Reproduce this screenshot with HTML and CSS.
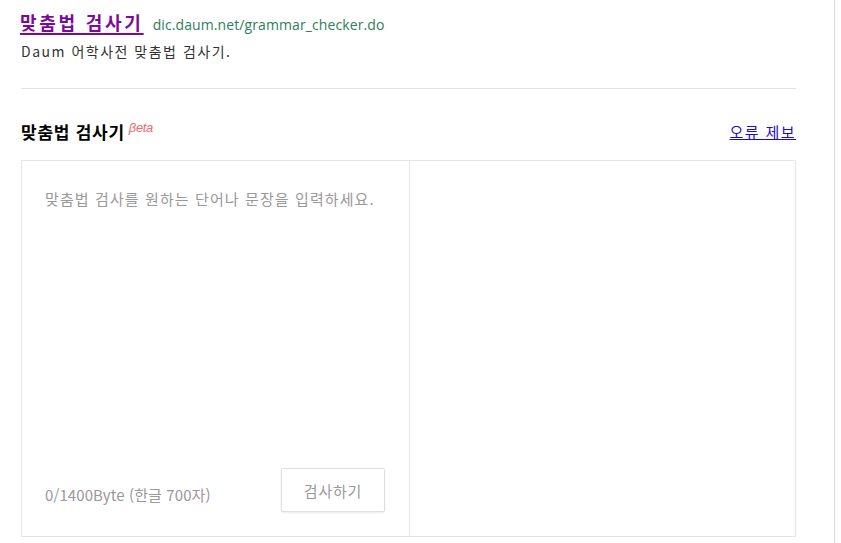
FILE: index.html
```html
<!DOCTYPE html>
<html lang="ko">
<head>
<meta charset="utf-8">
<title>맞춤법 검사기</title>
<link rel="stylesheet" href="styles.css">
</head>
<body>
<div class="page">
  <main class="content">
    <div class="result-head">
      <a class="result-title" href="#">맞춤법 검사기</a>
      <span class="result-url">dic.daum.net/grammar_checker.do</span>
    </div>
    <p class="result-desc">Daum 어학사전 맞춤법 검사기.</p>
    <hr class="sep">
    <div class="checker-head">
      <h2 class="checker-title">맞춤법 검사기<sup class="beta">βeta</sup></h2>
      <a class="report" href="#">오류 제보</a>
    </div>
    <div class="checker">
      <div class="panel panel-input">
        <p class="placeholder">맞춤법 검사를 원하는 단어나 문장을 입력하세요.</p>
        <div class="panel-foot">
          <span class="count">0/1400Byte (한글 700자)</span>
          <button class="check-btn" type="button">검사하기</button>
        </div>
      </div>
      <div class="panel panel-result"></div>
    </div>
  </main>
  <div class="rail"></div>
</div>
</body>
</html>
```

FILE: styles.css
```css
html, body {
  margin: 0;
  padding: 0;
  background: #fff;
  height: 100%;
}
body {
  font-family: "Noto Sans CJK KR", "Noto Sans", sans-serif;
  color: #222;
}
.page {
  display: flex;
  height: 100%;
}
.content {
  width: 775px;
  margin-left: 21px;
  padding-top: 9px;
}
.rail {
  margin-left: 38px;
  width: 0;
  border-left: 1px solid #dcdcdc;
}
.result-head {
  display: flex;
  align-items: baseline;
  gap: 9px;
  height: 30px;
}
.result-title {
  font-size: 18px;
  font-weight: 700;
  color: #7b0a99;
  text-decoration: underline;
  text-decoration-thickness: 2px;
  text-underline-offset: 3px;
  margin-left: -1px;
  letter-spacing: 2.75px;
}
.result-url {
  font-family: "Open Sans", "Noto Sans", sans-serif;
  font-size: 14px;
  color: #2e7d5b;
  letter-spacing: 0.1px;
}
.result-desc {
  margin: 0;
  font-size: 14px;
  line-height: 24px;
  color: #333;
  height: 24px;
  letter-spacing: 1.5px;
}
.sep {
  margin: 25px 0 0;
  border: 0;
  border-top: 1px solid #e2e2e2;
}
.checker-head {
  display: flex;
  justify-content: space-between;
  align-items: flex-end;
  height: 71px;
  box-sizing: border-box;
  padding-bottom: 17px;
}
.checker-title {
  margin: 0;
  font-size: 17px;
  font-weight: 700;
  color: #000;
  line-height: 22px;
  letter-spacing: 0.75px;
}
.beta {
  font-family: "Liberation Sans", sans-serif;
  font-size: 13px;
  font-style: italic;
  font-weight: 400;
  color: #f06a6a;
  margin-left: 4px;
  vertical-align: 7px;
  letter-spacing: -0.4px;
}
.report {
  font-size: 15px;
  line-height: 20px;
  color: #1a0dca;
  text-decoration: underline;
  letter-spacing: 1.4px;
  margin-bottom: 1px;
}
.checker {
  display: flex;
  height: 375px;
  border: 1px solid #e6e6e6;
}
.panel {
  box-sizing: border-box;
}
.panel-input {
  width: 388px;
  border-right: 1px solid #e6e6e6;
  display: flex;
  flex-direction: column;
  justify-content: space-between;
  padding: 27px 23px 24px 23px;
}
.panel-result {
  flex: 1;
}
.placeholder {
  margin: 0;
  font-size: 15px;
  line-height: 22px;
  color: #999;
  letter-spacing: 1.1px;
}
.panel-foot {
  display: flex;
  align-items: center;
  justify-content: space-between;
}
.count {
  font-size: 15px;
  color: #999;
  letter-spacing: 0.1px;
  padding-top: 8px;
}
.check-btn {
  width: 104px;
  height: 44px;
  margin-right: 1px;
  background: #fff;
  border: 1px solid #e0e0e0;
  border-radius: 2px;
  box-shadow: 0 1px 2px rgba(0,0,0,0.08);
  font-family: "Noto Sans CJK KR", sans-serif;
  font-size: 15px;
  color: #999;
  letter-spacing: 0.8px;
  padding: 0;
}
```
